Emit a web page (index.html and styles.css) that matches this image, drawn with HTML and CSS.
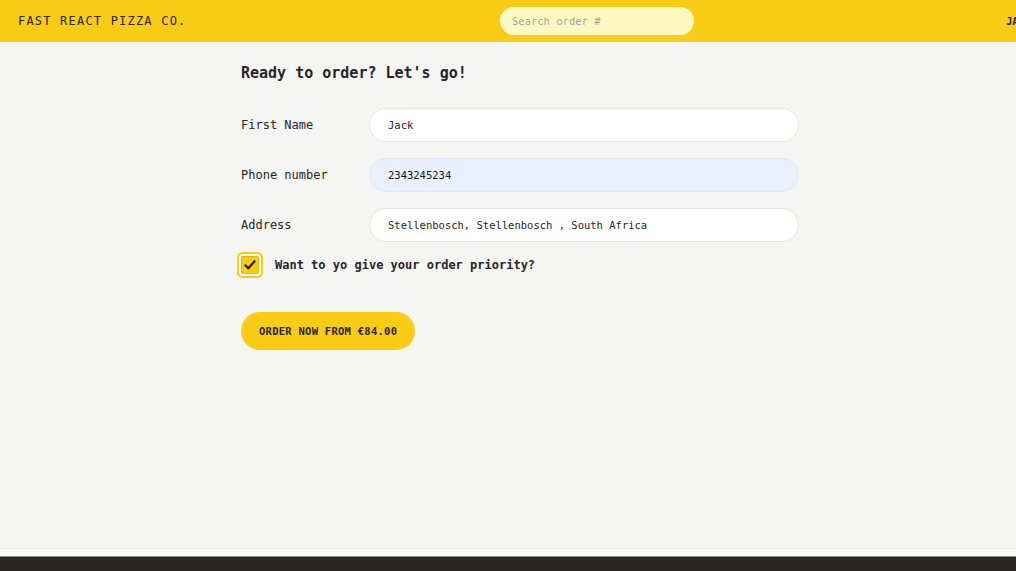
FILE: index.html
```html
<!DOCTYPE html>
<html lang="en">
<head>
<meta charset="utf-8">
<title>Fast React Pizza Co.</title>
<link rel="stylesheet" href="styles.css">
</head>
<body>
<div class="app">
  <header class="header">
    <a class="logo" href="#">Fast React Pizza Co.</a>
    <input class="search" type="text" placeholder="Search order #">
    <span class="username">Jack</span>
  </header>
  <main class="main">
    <div class="container">
      <h2 class="title">Ready to order? Let's go!</h2>
      <form class="form">
        <div class="row">
          <label class="label">First Name</label>
          <input class="input" type="text" value="Jack">
        </div>
        <div class="row">
          <label class="label">Phone number</label>
          <input class="input input-autofill" type="tel" value="2343245234">
        </div>
        <div class="row">
          <label class="label">Address</label>
          <input class="input" type="text" value="Stellenbosch, Stellenbosch , South Africa">
        </div>
        <div class="priority">
          <span class="checkbox">
            <svg viewBox="0 0 16 16" width="14" height="14"><path d="M2.8 8.4 L6.2 11.8 L13.2 3.8" fill="none" stroke="#292524" stroke-width="2.6" stroke-linecap="round" stroke-linejoin="round"/></svg>
          </span>
          <span class="priority-label">Want to yo give your order priority?</span>
        </div>
        <button class="button" type="button">Order now from €84.00</button>
      </form>
    </div>
  </main>
  <div class="scrollbar"></div>
  <footer class="footer"></footer>
</div>
</body>
</html>
```
FILE: styles.css
```css
* { box-sizing: border-box; }
html, body { margin: 0; padding: 0; overflow: hidden; }
body {
  font-family: "DejaVu Sans Mono", "Liberation Mono", monospace;
  color: #292524;
  background: #f5f5f4;
}
.app {
  height: 571px;
  display: flex;
  flex-direction: column;
}
.header {
  height: 42px;
  flex: none;
  display: grid;
  grid-template-columns: 482px 194px max-content;
  align-items: center;
  padding: 0 0 0 18px;
  background: #facc15;
  border-bottom: 1px solid #f2d04e;
  overflow: hidden;
  white-space: nowrap;
}
.logo {
  font-size: 12px;
  letter-spacing: 0.1em;
  text-transform: uppercase;
  color: #292524;
  text-decoration: none;
}
.search {
  width: 194px;
  height: 28px;
  border: none;
  border-radius: 999px;
  background: #fef9c3;
  padding: 0 12px;
  font-family: inherit;
  font-size: 10.5px;
  color: #292524;
  outline: none;
}
.search::placeholder { color: #a8a29e; }
.username {
  margin-left: 312px;
  font-size: 10.5px;
  font-weight: 600;
  text-transform: uppercase;
}
.main {
  flex: 1;
  background: #f5f5f4;
}
.container {
  width: 582px;
  margin: 0 auto;
  padding: 20px 0 0 24px;
}
.title {
  margin: 0 0 24px;
  font-size: 15px;
  font-weight: 700;
  line-height: 22px;
}
.form { display: flex; flex-direction: column; }
.row {
  display: flex;
  align-items: center;
  margin-bottom: 16px;
}
.label {
  width: 128px;
  flex: none;
  font-size: 12px;
}
.input {
  flex: 1;
  height: 34px;
  border: 1px solid #e7e5e4;
  border-radius: 999px;
  background: #fff;
  padding: 0 18px;
  font-family: inherit;
  font-size: 10.5px;
  color: #292524;
  outline: none;
}
.input-autofill {
  background: #e8f0fe;
  border-color: #e3e8f3;
  color: #111;
}
.priority {
  display: flex;
  align-items: center;
  margin-top: -2px;
  margin-bottom: 38px;
}
.checkbox {
  width: 18px;
  height: 18px;
  flex: none;
  background: #facc15;
  border: 1px solid #e6b800;
  border-radius: 2px;
  box-shadow: 0 0 0 2px #fff, 0 0 0 4px #facc15;
  display: flex;
  align-items: center;
  justify-content: center;
}
.priority-label {
  margin-left: 16px;
  font-size: 12px;
  font-weight: 600;
}
.button {
  align-self: flex-start;
  height: 38px;
  padding: 0 18px;
  border: none;
  border-radius: 999px;
  background: #facc15;
  font-family: inherit;
  font-size: 10.5px;
  font-weight: 700;
  letter-spacing: 0.025em;
  text-transform: uppercase;
  color: #292524;
}
.scrollbar {
  height: 9px;
  flex: none;
  background: #fafafa;
  border-top: 1px solid #ebebeb;
  border-bottom: 1px solid #8f8f8f;
}
.footer {
  height: 14px;
  flex: none;
  background: #292524;
}
```
